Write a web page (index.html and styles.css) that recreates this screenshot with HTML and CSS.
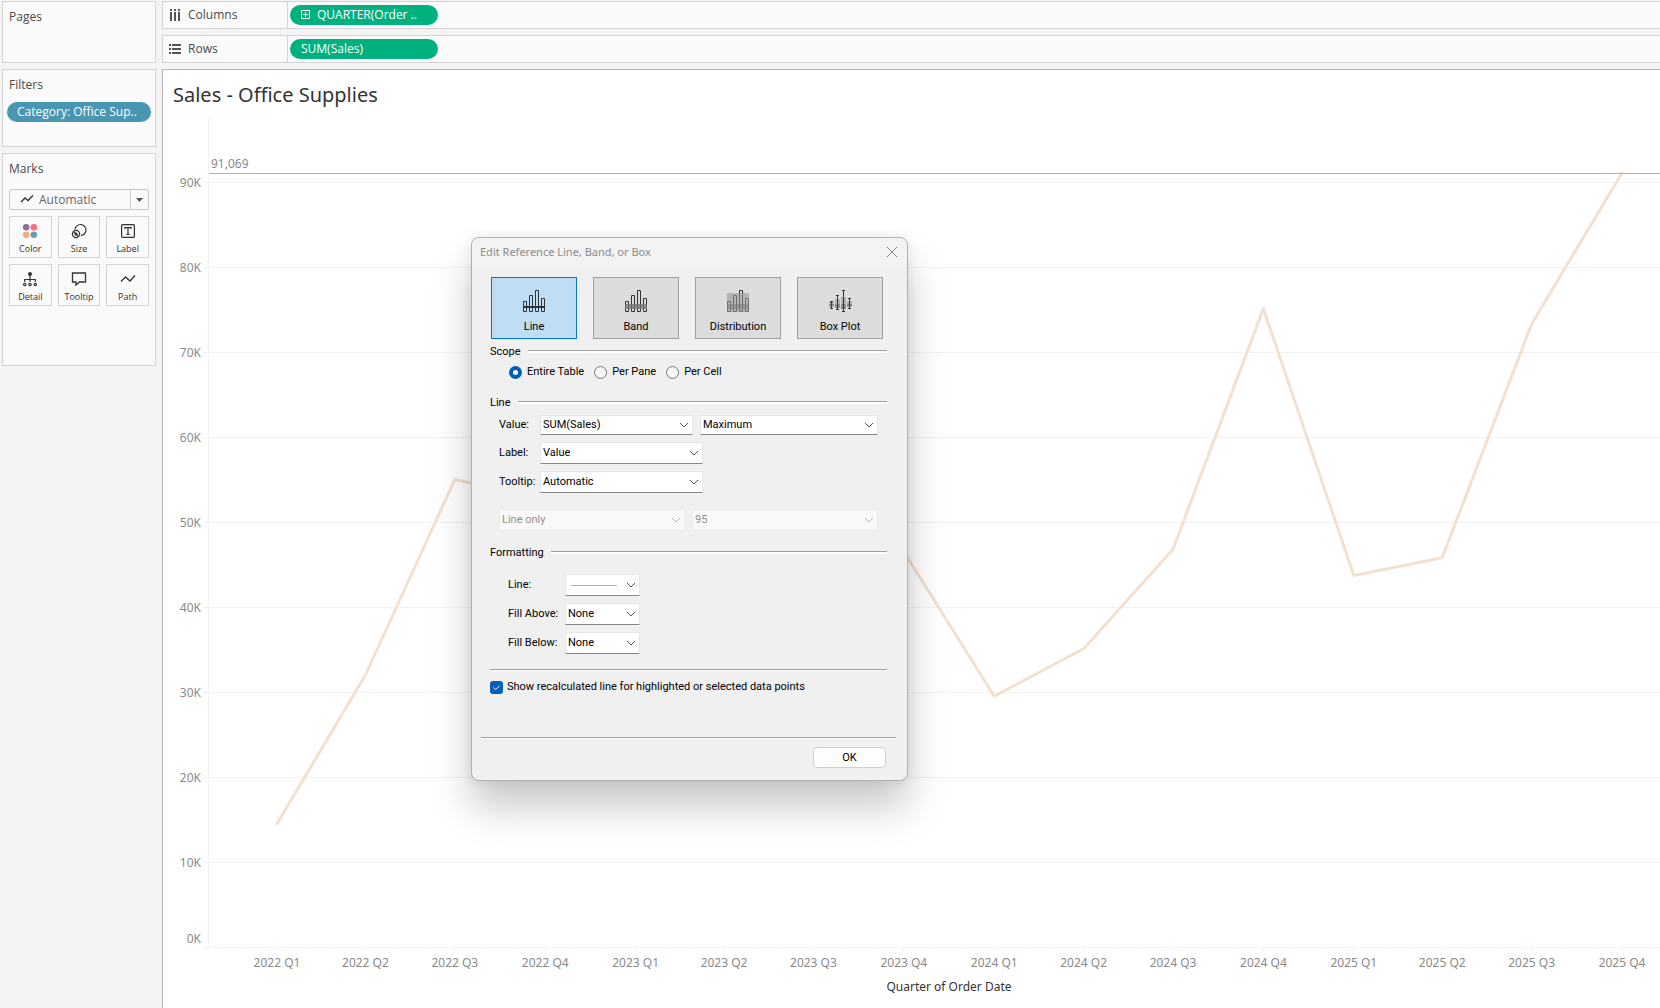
FILE: index.html
```html
<!DOCTYPE html>
<html lang="en">
<head>
    <meta charset="UTF-8">
    <meta name="viewport" content="width=device-width, initial-scale=1.0">
    <title>Sales - Office Supplies</title>
    <link rel="stylesheet" href="styles.css">
</head>
<body>

<div class="workspace">
    <aside class="sidebar">
        <section class="card pages">
            <h2>Pages</h2>
        </section>
        <section class="card filters">
            <h2>Filters</h2>
            <button class="pill pill-blue">Category: Office Sup..</button>
        </section>
        <section class="card marks">
            <h2>Marks</h2>
            <div class="mark-type">
                <svg class="mark-type-icon" width="14" height="10" viewBox="0 0 14 10"><path d="M1 8l4-4 3 2.500 5-5" fill="none" stroke="#333" stroke-width="1.300"/></svg>
                <select aria-label="Mark type">
                    <option>Automatic</option>
                </select>
            </div>
            <div class="mark-grid">
                <button>
                    <svg width="16" height="16" viewBox="0 0 16 16"><circle cx="4.200" cy="4.200" r="3.300" fill="#86709a"/><circle cx="11.800" cy="4.200" r="3.300" fill="#fb6f7f"/><circle cx="4.200" cy="11.800" r="3.300" fill="#f5a87b"/><circle cx="11.800" cy="11.800" r="3.300" fill="#6f9aa8"/></svg>
                    Color
                </button>
                <button>
                    <svg width="16" height="16" viewBox="0 0 16 16" fill="none" stroke="#333" stroke-width="1.200"><path d="M4 6.500a5.500 5.500 0 1 1 5.800 6"/><circle cx="5" cy="11" r="3.600"/><path d="M2.500 8.500l5 5"/><circle cx="5" cy="11" r="1"/></svg>
                    Size
                </button>
                <button>
                    <svg width="16" height="16" viewBox="0 0 16 16" fill="none" stroke="#333" stroke-width="1.200"><rect x="1.600" y="1.600" width="12.800" height="12.800" rx="1"/><path d="M4.900 6V4.600h6.200V6M8 4.600v6.800M6.500 11.400h3"/></svg>
                    Label
                </button>
                <button>
                    <svg width="16" height="16" viewBox="0 0 16 16" fill="none" stroke="#333" stroke-width="1.200"><circle cx="8" cy="3" r="2" fill="#333" stroke="none"/><path d="M8 4v7M2.700 11V8.500h10.600V11"/><circle cx="2.700" cy="13.500" r="1.200"/><circle cx="8" cy="13.500" r="1.200"/><circle cx="13.300" cy="13.500" r="1.200"/></svg>
                    Detail
                </button>
                <button>
                    <svg width="16" height="16" viewBox="0 0 16 16" fill="none" stroke="#333" stroke-width="1.300"><path d="M1.500 2h13v9H8.300L5 14v-3H1.500z"/></svg>
                    Tooltip
                </button>
                <button>
                    <svg width="16" height="16" viewBox="0 0 16 16" fill="none" stroke="#333" stroke-width="1.300"><path d="M1 10.500l4.500-4.500 4.500 4 5-5.500"/></svg>
                    Path
                </button>
            </div>
        </section>
    </aside>

    <main class="content">
        <div class="shelf">
            <div class="shelf-name">
                <svg width="12" height="12" viewBox="0 0 12 12" fill="#555"><path d="M1 0h2v2H1zM5 0h2v2H5zM9 0h2v2H9zM1 3h2v9H1zM5 3h2v9H5zM9 3h2v9H9z"/></svg>
                Columns
            </div>
            <button class="pill pill-green">
                <svg width="9" height="9" viewBox="0 0 9 9" fill="none" stroke="#fff"><path d="M.5.500h8v8h-8zM2 4.500h5M4.500 2v5"/></svg>
                QUARTER(Order ..
            </button>
        </div>
        <div class="shelf">
            <div class="shelf-name">
                <svg width="12" height="12" viewBox="0 0 12 12" fill="#555"><path d="M0 1h2v2H0zM0 5h2v2H0zM0 9h2v2H0zM3 1h9v2H3zM3 5h9v2H3zM3 9h9v2H3z"/></svg>
                Rows
            </div>
            <button class="pill pill-green">SUM(Sales)</button>
        </div>
        <div class="view">
            <h1>Sales - Office Supplies</h1>
            <svg id="chart" class="chart" viewBox="0 0 1497 890" role="img" aria-label="Sales by quarter of order date"></svg>
        </div>
    </main>
</div>

<form class="dialog" role="dialog" aria-labelledby="dialogTitle" onsubmit="return false">
    <header class="dialog-title">
        <h2 id="dialogTitle">Edit Reference Line, Band, or Box</h2>
        <button type="button" class="close" aria-label="Close">
            <svg width="12" height="12" viewBox="0 0 12 12"><path d="M1 1l10 10M11 1L1 11" stroke="#888"/></svg>
        </button>
    </header>

    <div class="dialog-body">
        <div class="types">
            <button type="button" class="active">
                <svg width="24" height="24" viewBox="0 0 24 24" fill="none" stroke="#333"><path d="M1.500 12.500h3v10h-3zM7.500 6.500h3v16h-3zM13.500 1.500h3v21h-3zM19.500 9.500h3v13h-3z"/><path d="M1 18h22" stroke-width="2"/></svg>
                Line
            </button>
            <button type="button">
                <svg width="24" height="24" viewBox="0 0 24 24" fill="none" stroke="#333"><path d="M1.500 12.500h3v10h-3zM7.500 6.500h3v16h-3zM13.500 1.500h3v21h-3zM19.500 9.500h3v13h-3z"/><path d="M1 15h22v5H1z" fill="#777" fill-opacity=".8" stroke="none"/></svg>
                Band
            </button>
            <button type="button">
                <svg width="24" height="24" viewBox="0 0 24 24" fill="none" stroke="#333"><path d="M1.500 12.500h3v10h-3zM7.500 6.500h3v16h-3zM13.500 1.500h3v21h-3zM19.500 9.500h3v13h-3z"/><path d="M1 4h22v19H1z" fill="#999" fill-opacity=".6" stroke="none"/><path d="M1 15h22v5H1z" fill="#777" fill-opacity=".5" stroke="none"/></svg>
                Distribution
            </button>
            <button type="button">
                <svg width="24" height="24" viewBox="0 0 24 24" fill="none" stroke="#333"><path d="M1 13h5v5H1zM7 10h5v9H7zM13 8h5v12h-5zM19 12h5v6h-5z" fill="#b0b0b0" stroke="none"/><path d="M1 15h5v2H1zM7 15h5v4H7zM13 15h5v5h-5zM19 15h5v2h-5z" fill="#888" stroke="none"/><path d="M3.500 12v7M2 12.500h3M2 19.500h3M9.500 6v14M8 6.500h3M8 20.500h3M15.500 1v21M14 1.500h3M14 22.500h3M21.500 9v10M20 9.500h3M20 19.500h3"/></svg>
                Box Plot
            </button>
        </div>

        <fieldset class="group scope">
            <legend>Scope</legend>
            <label><input type="radio" name="scope" checked> Entire Table</label>
            <label><input type="radio" name="scope"> Per Pane</label>
            <label><input type="radio" name="scope"> Per Cell</label>
        </fieldset>

        <fieldset class="group line">
            <legend>Line</legend>
            <div class="field first">
                <label for="value">Value:</label>
                <select id="value"><option>SUM(Sales)</option></select>
                <select class="wide" aria-label="Aggregation"><option>Maximum</option></select>
            </div>
            <div class="field">
                <label for="label">Label:</label>
                <select id="label"><option>Value</option></select>
            </div>
            <div class="field">
                <label for="tooltip">Tooltip:</label>
                <select id="tooltip"><option>Automatic</option></select>
            </div>
            <div class="interval">
                <select disabled aria-label="Interval"><option>Line only</option></select>
                <select disabled aria-label="Confidence"><option>95</option></select>
            </div>
        </fieldset>

        <fieldset class="group formatting">
            <legend>Formatting</legend>
            <div class="field">
                <label for="lineStyle">Line:</label>
                <select id="lineStyle" class="line-style"><option aria-label="Solid"></option></select>
            </div>
            <div class="field">
                <label for="fillAbove">Fill Above:</label>
                <select id="fillAbove"><option>None</option></select>
            </div>
            <div class="field">
                <label for="fillBelow">Fill Below:</label>
                <select id="fillBelow"><option>None</option></select>
            </div>
        </fieldset>

        <label class="recalculated"><input type="checkbox" checked> Show recalculated line for highlighted or selected data points</label>
    </div>

    <footer class="dialog-footer">
        <button class="ok">OK</button>
    </footer>
</form>

<script>
    const sales = [14500, 32000, 55000, 52700, 57000, 61000, 58000, 46500, 29500, 35100, 46800, 75100, 43700, 45800, 73300, 91069];
    const DAY = 24 * 60 * 60 * 1000;
    const start = Date.UTC(2022, 0, 1);
    const baseline = 830;

    // month 0 is January 2022
    function xAt(month) {
        return 114 + (Date.UTC(2022, month, 1) - start) / DAY * 0.9825;
    }

    function yAt(value) {
        return baseline - value * 0.0085;
    }

    function hline(x1, y, x2, cls) {
        return `<line class="${cls}" x1="${x1}" y1="${y + 0.5}" x2="${x2}" y2="${y + 0.5}"/>`;
    }

    function vline(x, y1, y2) {
        x = Math.floor(x) + 0.5;
        return `<line class="grid" x1="${x}" y1="${y1}" x2="${x}" y2="${y2}"/>`;
    }

    function drawChart() {
        let out = vline(45, 0, baseline);
        for (let k = 0; k <= 90; k += 10) {
            const y = yAt(k * 1000);
            out += hline(40, y, 1497, "grid");
            out += `<text class="tick end" x="38" y="${k === 0 ? y - 4 : y + 5}">${k}K</text>`;
        }
        for (let m = -2; m <= 46; m++) {
            out += vline(xAt(m), baseline, baseline + (m % 3 === 0 ? 5 : 2));
        }
        const points = sales.map((v, i) => `${xAt(i * 3)},${yAt(v)}`);
        out += `<polyline class="series" points="${points.join(" ")}"/>`;
        sales.forEach((v, i) => {
            const year = 2022 + Math.floor(i / 4);
            out += `<text class="tick middle" x="${xAt(i * 3)}" y="850">${year} Q${i % 4 + 1}</text>`;
        });
        out += hline(46, 56, 1497, "reference");
        out += `<text class="tick" x="48" y="51">91,069</text>`;
        out += `<text class="axis-title middle" x="786" y="874">Quarter of Order Date</text>`;
        document.getElementById("chart").innerHTML = out;
    }

    drawChart();
</script>

</body>
</html>
```
FILE: styles.css
```css
* {
    box-sizing: border-box;
}
body {
    margin: 0;
    min-height: 100vh;
    background-color: #f4f4f4;
    color: #4a4a4a;
    font-family: "Open Sans", sans-serif;
    font-size: 12px;
    overflow: hidden;
}
h1, h2 {
    margin: 0;
    font-weight: 400;
}
button, select, input {
    margin: 0;
    font: inherit;
    color: inherit;
}
.workspace {
    display: grid;
    grid-template-columns: 162px minmax(0, 1fr);
    height: 100vh;
}

/* sidebar */
.sidebar {
    display: flex;
    flex-direction: column;
    gap: 6px;
    padding: 1px 6px 0 2px;
}
.card {
    background: #fafafa;
    border: 1px solid #d4d4d4;
    padding: 6px;
}
.card h2 {
    font-size: 12px;
    line-height: 17px;
}
.pages {
    min-height: 62px;
}
.filters {
    min-height: 78px;
    padding: 6px 4px;
}
.filters h2 {
    padding-left: 2px;
}
.marks {
    min-height: 213px;
}
.pill {
    display: flex;
    align-items: center;
    gap: 7px;
    height: 20px;
    border: none;
    border-radius: 10px;
    color: #fff;
    font-size: 12px;
    font-weight: 500;
    white-space: nowrap;
}
.pill-blue {
    width: 100%;
    margin-top: 9px;
    padding: 0 10px 1px;
    background: #4996b2;
}
.pill-green {
    width: 148px;
    padding: 0 11px 1px;
    background: #00b180;
}
.mark-type {
    position: relative;
    margin-top: 12px;
}
.mark-type-icon {
    position: absolute;
    left: 11px;
    top: 5px;
}
.mark-type select {
    appearance: none;
    display: block;
    width: 140px;
    height: 21px;
    padding: 0 28px 0 29px;
    border: 1px solid #c8c8c8;
    border-radius: 2px;
    background: url("data:image/svg+xml,%3Csvg xmlns='http://www.w3.org/2000/svg' width='18' height='19'%3E%3Cpath d='M.5 0v19' stroke='%23d4d4d4'/%3E%3Cpath d='M6 8h7l-3.500 4z' fill='%23555'/%3E%3C/svg%3E") right center no-repeat #fafafa;
    color: #666;
}
.mark-grid {
    display: grid;
    grid-template-columns: repeat(3, 1fr);
    gap: 6px;
    width: 140px;
    margin-top: 6px;
}
.mark-grid button {
    display: flex;
    flex-direction: column;
    align-items: center;
    gap: 4px;
    height: 42px;
    padding: 6px 0 0;
    border: 1px solid #d4d4d4;
    background: #fafafa;
    color: #333;
    font-size: 9px;
    line-height: 12px;
}

/* shelves and view */
.content {
    display: flex;
    flex-direction: column;
    gap: 6px;
    padding-top: 1px;
}
.shelf {
    display: flex;
    align-items: center;
    height: 28px;
    border: 1px solid #d4d4d4;
    border-right: none;
    background: #fafafa;
}
.shelf-name {
    display: flex;
    align-items: center;
    gap: 7px;
    align-self: stretch;
    width: 125px;
    margin-right: 2px;
    padding: 0 0 1px 6px;
    border-right: 1px solid #d4d4d4;
}
.view {
    flex: 1;
    border: 1px solid #b4b4b4;
    border-width: 1px 0 0 1px;
    background: #fff;
}
.view h1 {
    padding: 11px 10px 8px;
    color: #333;
    font-family: "Noto Sans", sans-serif;
    font-size: 20px;
    line-height: 28px;
}
.chart {
    display: block;
    width: 100%;
    font-family: "Noto Sans", sans-serif;
}
.grid {
    stroke: #f2f2f2;
}
.reference {
    stroke: #b0b0b0;
}
.series {
    fill: none;
    stroke: #f3e0cf;
    stroke-width: 3;
    stroke-linejoin: round;
    stroke-linecap: round;
}
.tick {
    fill: #8a8a8a;
    font-size: 12px;
}
.axis-title {
    fill: #333;
    font-size: 12px;
}
.middle {
    text-anchor: middle;
}
.end {
    text-anchor: end;
}

/* reference line dialog */
.dialog {
    position: absolute;
    left: 471px;
    top: 237px;
    width: 437px;
    border: 1px solid #b0b0b0;
    border-radius: 8px;
    background: #f0f0f0;
    box-shadow: 0 26px 40px rgba(0, 0, 0, 0.22), 0 0 12px rgba(0, 0, 0, 0.08);
    color: #000;
    font-family: Roboto, sans-serif;
    font-size: 11px;
    line-height: 14px;
}
.dialog-title {
    display: flex;
    align-items: center;
    justify-content: space-between;
    height: 30px;
    padding: 0 9px 2px 8px;
    border-radius: 8px 8px 0 0;
    background: #f3f3f3;
    color: #8c8c8c;
}
.dialog-title h2 {
    font-family: "Noto Sans", sans-serif;
    font-size: 11px;
}
.close {
    display: flex;
    padding: 0;
    border: none;
    background: none;
}
.dialog-body {
    padding: 9px 20px 0 18px;
}
.types {
    display: flex;
    gap: 16px;
    padding-left: 1px;
}
.types button {
    display: flex;
    flex-direction: column;
    align-items: center;
    gap: 7px;
    width: 86px;
    height: 62px;
    padding: 11px 0 0;
    border: 1px solid #a0a0a0;
    background: #dcdcdc;
    line-height: 14px;
}
.types .active {
    border-color: #0078d4;
    background: #bfddf5;
}
.group {
    margin: 0;
    padding: 0;
    border: none;
}
.group legend {
    display: flex;
    align-items: center;
    gap: 7px;
    width: 100%;
    padding: 0;
}
.group legend::after {
    content: "";
    flex: 1;
    height: 2px;
    margin-bottom: 2px;
    border-top: 1px solid #a0a0a0;
    background: #fff;
}
.scope {
    display: flex;
    gap: 10px;
    margin-top: 6px;
    padding-left: 19px;
}
.scope legend {
    margin-left: -19px;
    width: 397px;
}
.scope label {
    display: flex;
    align-items: center;
    gap: 5px;
    margin-top: 6px;
}
input[type="radio"] {
    appearance: none;
    width: 13px;
    height: 13px;
    border: 1px solid #777;
    border-radius: 50%;
    background: #f8f8f8;
}
input[type="radio"]:checked {
    border: 4px solid #005fb8;
    background: #fff;
}
.line {
    margin-top: 17px;
}
.field {
    display: flex;
    align-items: center;
    margin-top: 7px;
}
.dialog select {
    appearance: none;
    height: 22px;
    padding: 0 20px 0 2px;
    border: 1px solid #e6e6e6;
    border-bottom-color: #868686;
    border-radius: 1px;
    background: url("data:image/svg+xml,%3Csvg xmlns='http://www.w3.org/2000/svg' width='10' height='6'%3E%3Cpath d='M1 1l4 4 4-4' fill='none' stroke='%23555'/%3E%3C/svg%3E") right 3px center no-repeat #fff;
}
.line .field {
    padding-left: 9px;
}
.line .field label {
    width: 41px;
}
.line .field select {
    width: 163px;
}
.line .first {
    margin-top: 5px;
}
.line .first select {
    width: 153px;
    height: 20px;
}
.line .first .wide {
    width: 178px;
    margin-left: 7px;
}
.interval {
    display: flex;
    gap: 7px;
    margin-top: 16px;
    padding: 0 9px;
}
.interval select {
    flex: 1;
}
.dialog select:disabled {
    border-color: #ebebeb;
    background-color: #fcfcfc;
    color: #777;
    opacity: 0.8;
    background-image: url("data:image/svg+xml,%3Csvg xmlns='http://www.w3.org/2000/svg' width='10' height='6'%3E%3Cpath d='M1 1l4 4 4-4' fill='none' stroke='%23aaa'/%3E%3C/svg%3E");
}
.formatting {
    margin-top: 15px;
    padding-bottom: 15px;
    border-bottom: 1px solid #a0a0a0;
    box-shadow: 0 1px #fff;
}
.formatting .field {
    padding-left: 18px;
}
.formatting legend + .field {
    margin-top: 14px;
}
.formatting .field label {
    width: 57px;
}
.formatting .field select {
    width: 75px;
}
.dialog .line-style {
    background-image: linear-gradient(#b0b0b0, #b0b0b0), url("data:image/svg+xml,%3Csvg xmlns='http://www.w3.org/2000/svg' width='10' height='6'%3E%3Cpath d='M1 1l4 4 4-4' fill='none' stroke='%23555'/%3E%3C/svg%3E");
    background-size: 46px 1px, auto;
    background-position: 5px center, right 3px center;
}
.recalculated {
    display: flex;
    align-items: center;
    gap: 4px;
    margin-top: 10px;
}
input[type="checkbox"] {
    appearance: none;
    width: 13px;
    height: 13px;
    border-radius: 3px;
    background: url("data:image/svg+xml,%3Csvg xmlns='http://www.w3.org/2000/svg' width='13' height='13'%3E%3Cpath d='M3.500 6.500l2.200 2.200 4-4' fill='none' stroke='%23fff'/%3E%3C/svg%3E") #005fb8;
}
.dialog-footer {
    display: flex;
    justify-content: flex-end;
    margin: 43px 11px 0 9px;
    padding: 9px 10px 12px;
    border-top: 1px solid #a0a0a0;
    box-shadow: inset 0 1px #fff;
}
.ok {
    width: 73px;
    height: 21px;
    padding: 0;
    border: 1px solid #d0d0d0;
    border-radius: 4px;
    background: #fdfdfd;
}
```
